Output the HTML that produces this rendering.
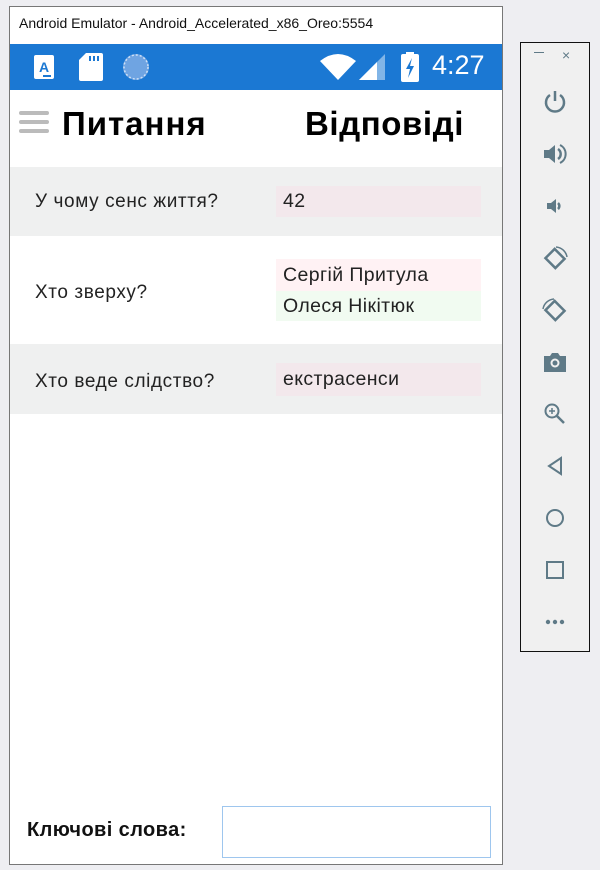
<!DOCTYPE html>
<html><head><meta charset="utf-8"><style>
*{margin:0;padding:0;box-sizing:border-box}
body{width:600px;height:870px;background:#eeeef2;position:relative;overflow:hidden;font-family:"Segoe UI","Liberation Sans","DejaVu Sans",sans-serif;color:#222}
.abs{position:absolute}
#win{left:9px;top:6px;width:494px;height:859px;border:1px solid #777;background:#fff}
.title{left:19px;top:15px;font-size:14px;color:#111}
.status{left:10px;top:44px;width:492px;height:46px;background:#1b78d3}
.row{left:10px;width:492px}
.q{font-size:19px;letter-spacing:0.6px;color:#222;left:35px}
.a{left:276px;width:205px;font-size:19.5px;letter-spacing:0.4px;color:#222;padding-left:7px}
#panel{left:520px;top:42px;width:70px;height:610px;border:1px solid #111;background:#f0f0f0}
.ic{position:absolute;left:21px;width:26px;height:26px}
</style></head><body>
<div id="win" class="abs"></div>
<div class="abs title">Android Emulator - Android_Accelerated_x86_Oreo:5554</div>
<div class="abs status"></div>
<svg class="abs" style="left:34px;top:53px" width="20" height="28"><rect x="0" y="2" width="20" height="24" rx="2" fill="#fff"/><text x="10" y="19" font-size="14" font-weight="bold" fill="#1b78d3" text-anchor="middle" font-family="Liberation Sans">A</text><rect x="9" y="22" width="8" height="2" fill="#1b78d3"/></svg>
<svg class="abs" style="left:79px;top:53px" width="24" height="28"><path d="M7 0H22a2 2 0 0 1 2 2V26a2 2 0 0 1-2 2H2a2 2 0 0 1-2-2V7z" fill="#fff"/><rect x="10" y="3" width="2" height="5" fill="#1b78d3"/><rect x="14" y="3" width="2" height="5" fill="#1b78d3"/><rect x="18" y="3" width="2" height="5" fill="#1b78d3"/></svg>
<svg class="abs" style="left:122px;top:53px" width="28" height="28"><circle cx="14" cy="14" r="13" fill="#6fa4e2"/><circle cx="14" cy="14" r="12" fill="none" stroke="#cfe0f5" stroke-width="1.5" stroke-dasharray="2 2"/></svg>
<svg class="abs" style="left:320px;top:53px" width="36" height="28"><path d="M0 8Q18-6 36 8L18 27z" fill="#fff"/></svg>
<svg class="abs" style="left:359px;top:54px" width="26" height="26"><path d="M26 0V26H0z" fill="#fff" opacity=".45"/><path d="M18 8V26H0z" fill="#fff"/></svg>
<svg class="abs" style="left:401px;top:52px" width="18" height="30"><rect x="5" y="0" width="8" height="3" fill="#fff"/><rect x="0" y="2" width="18" height="28" rx="2" fill="#fff"/><path d="M11 6L5 17H9L7 26L13 14H9z" fill="#1b78d3"/></svg>
<div class="abs" style="left:432px;top:50px;font-size:27px;color:#fff;font-family:'Liberation Sans',sans-serif">4:27</div>
<div class="abs" style="left:19px;top:111px;width:30px;height:4px;background:#bbb;border-radius:2px"></div>
<div class="abs" style="left:19px;top:120px;width:30px;height:4px;background:#bbb;border-radius:2px"></div>
<div class="abs" style="left:19px;top:129px;width:30px;height:4px;background:#bbb;border-radius:2px"></div>
<div class="abs" style="left:62px;top:102px;font-size:33px;letter-spacing:1px;font-weight:bold;color:#000;line-height:44px">Питання</div>
<div class="abs" style="left:305px;top:102px;font-size:33px;letter-spacing:0.6px;font-weight:bold;color:#000;line-height:44px">Відповіді</div>
<div class="abs row" style="top:167px;height:69px;background:#eff0f0"></div>
<div class="abs row" style="top:344px;height:70px;background:#eff0f0"></div>
<div class="abs q" style="top:189px;line-height:26px">У чому сенс життя?</div>
<div class="abs a" style="top:186px;height:31px;line-height:31px;background:#f3e8ec">42</div>
<div class="abs q" style="top:280px;line-height:26px">Хто зверху?</div>
<div class="abs a" style="top:259px;height:32px;line-height:32px;background:#fff2f4">Сергій Притула</div>
<div class="abs a" style="top:291px;height:30px;line-height:30px;background:#f1fbf1">Олеся Нікітюк</div>
<div class="abs q" style="top:369px;line-height:26px">Хто веде слідство?</div>
<div class="abs a" style="top:363px;height:33px;line-height:33px;background:#f3e8ec">екстрасенси</div>
<div class="abs" style="left:27px;top:819px;font-size:20px;letter-spacing:0.4px;font-weight:bold;color:#111">Ключові слова:</div>
<div class="abs" style="left:222px;top:806px;width:269px;height:52px;border:1px solid #9ec6ee;background:#fff"></div>
<div id="panel" class="abs">
<div style="position:absolute;left:13px;top:9px;width:10px;height:1px;background:#5f7a87"></div>
<div style="position:absolute;left:41px;top:5px;font-size:14px;color:#5f7a87;line-height:14px;font-family:'Liberation Sans'">×</div>
<svg class="ic" style="top:46px" viewBox="0 0 26 26"><path d="M8 6A9 9 0 1 0 18 6" fill="none" stroke="#5f7a87" stroke-width="2.5"/><path d="M13 2V12" stroke="#5f7a87" stroke-width="2.5"/></svg>
<svg class="ic" style="top:98px" viewBox="0 0 26 26"><path d="M2 9H7L13 4V22L7 17H2z" fill="#5f7a87"/><path d="M16 8A6 6 0 0 1 16 18" fill="none" stroke="#5f7a87" stroke-width="2.5"/><path d="M18 4A10 10 0 0 1 18 22" fill="none" stroke="#5f7a87" stroke-width="2"/></svg>
<svg class="ic" style="top:150px" viewBox="0 0 26 26"><path d="M5 10H9L14 6V20L9 16H5z" fill="#5f7a87"/><path d="M16 10A4 4 0 0 1 16 16" fill="none" stroke="#5f7a87" stroke-width="2.5"/></svg>
<svg class="ic" style="top:202px" viewBox="0 0 26 26"><rect x="6" y="7" width="14" height="13" transform="rotate(45 13 13.5)" fill="none" stroke="#5f7a87" stroke-width="2.5"/><path d="M14 2A12 12 0 0 1 25 12" fill="none" stroke="#5f7a87" stroke-width="1.5"/></svg>
<svg class="ic" style="top:254px" viewBox="0 0 26 26"><rect x="6" y="7" width="14" height="13" transform="rotate(45 13 13.5)" fill="none" stroke="#5f7a87" stroke-width="2.5"/><path d="M1 12A12 12 0 0 1 12 2" fill="none" stroke="#5f7a87" stroke-width="1.5"/></svg>
<svg class="ic" style="top:306px" viewBox="0 0 26 26"><path d="M2 7H8L10 4H16L18 7H24V23H2z" fill="#5f7a87"/><circle cx="13" cy="14" r="4.5" fill="#f0f0f0"/><circle cx="13" cy="14" r="2.5" fill="#5f7a87"/></svg>
<svg class="ic" style="top:358px" viewBox="0 0 26 26"><circle cx="10" cy="10" r="6.5" fill="none" stroke="#5f7a87" stroke-width="2"/><path d="M15 15L22 22" stroke="#5f7a87" stroke-width="2.5"/><path d="M7 10H13M10 7V13" stroke="#5f7a87" stroke-width="1.5"/></svg>
<svg class="ic" style="top:410px" viewBox="0 0 26 26"><path d="M19 5V21L7 13z" fill="none" stroke="#5f7a87" stroke-width="2"/></svg>
<svg class="ic" style="top:462px" viewBox="0 0 26 26"><circle cx="13" cy="13" r="8" fill="none" stroke="#5f7a87" stroke-width="2"/></svg>
<svg class="ic" style="top:514px" viewBox="0 0 26 26"><rect x="5" y="5" width="16" height="16" fill="none" stroke="#5f7a87" stroke-width="2"/></svg>
<svg class="ic" style="top:566px" viewBox="0 0 26 26"><circle cx="6" cy="13" r="2.2" fill="#5f7a87"/><circle cx="13" cy="13" r="2.2" fill="#5f7a87"/><circle cx="20" cy="13" r="2.2" fill="#5f7a87"/></svg>
</div>
</body></html>
